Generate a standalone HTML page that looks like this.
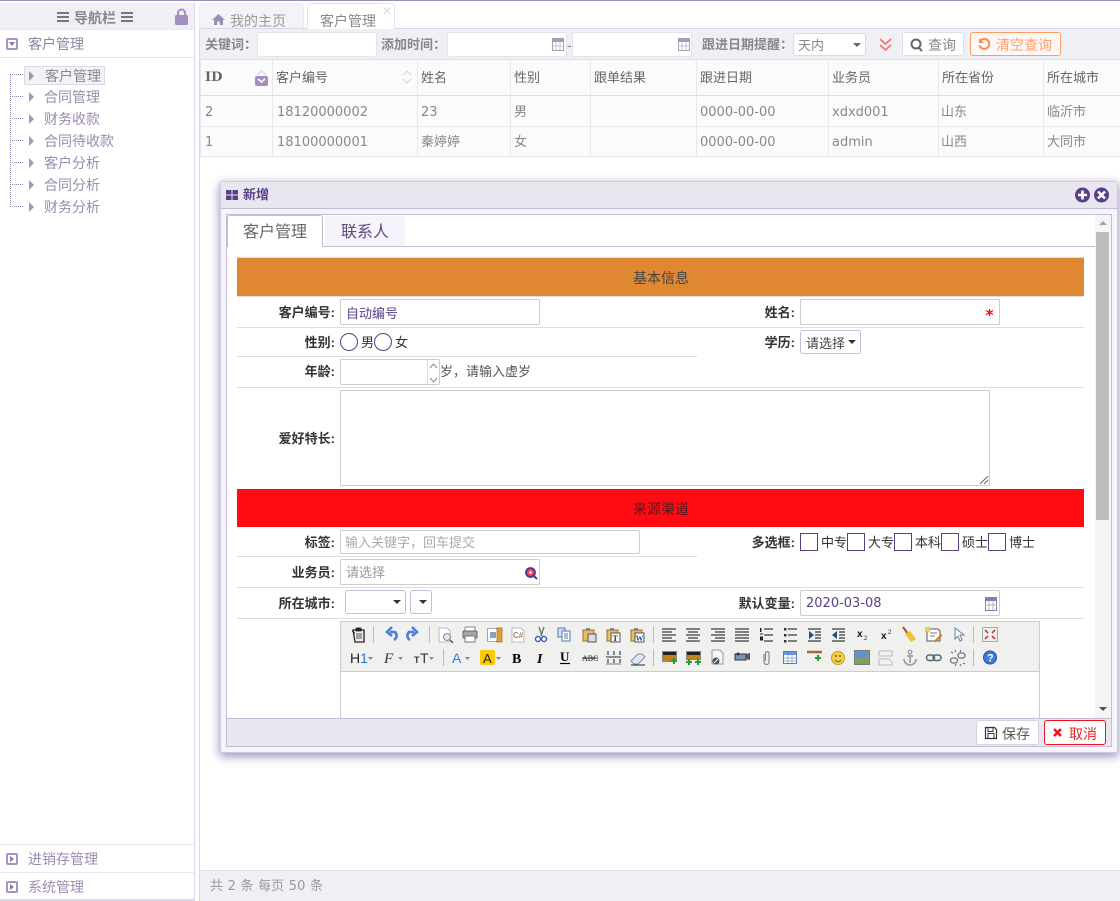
<!DOCTYPE html>
<html lang="zh"><head><meta charset="utf-8"><title>客户管理</title>
<style>
*{box-sizing:border-box}
html,body{margin:0;padding:0;width:1120px;height:901px;overflow:hidden;background:#fff}
body{position:relative;font:14px/18px "Liberation Sans","WenQuanYi Zen Hei","Noto Sans CJK SC",sans-serif;color:#777}
.a,.t,.i{position:absolute}
.t{white-space:nowrap;margin-top:1px}
.f{font-size:13px;margin-top:2px}
.n{font-family:"DejaVu Sans","WenQuanYi Zen Hei",sans-serif;font-size:13px;margin-top:2px}
.i{background:#fff;border:1px solid #ccc;border-radius:2px}
.tr{color:#9a8bb0}
.th{color:#666;top:68px;font-size:13px}
.r1{top:102px;color:#888;font-size:13px}
.r2{top:132px;color:#888;font-size:13px}
.v{position:absolute;top:60px;width:1px;height:97px;background:#e8e8ea}
.h{position:absolute;height:1px;background:#ddd}
.l{color:#333;font-weight:bold;text-align:right;width:100px;font-size:13px;margin-top:2px}
.l2{color:#333;font-size:13px;margin-top:2px}
.dot{position:absolute;left:10px;width:13px;border-top:1px dotted #8f80ad}
.tri{position:absolute;width:0;height:0;border-left:5px solid #a596bd;border-top:5px solid transparent;border-bottom:5px solid transparent;left:29px}
.caret{position:absolute;width:0;height:0;border-top:4px solid #333;border-left:4px solid transparent;border-right:4px solid transparent}
.cb{position:absolute;top:533px;width:18px;height:18px;border:1px solid #5a3f87;background:#fff}
svg{position:absolute;overflow:visible}
svg text{letter-spacing:0}
</style></head><body>

<div class="a" style="left:0;top:0;width:1120px;height:1px;background:#9d8bbd"></div>

<!-- sidebar -->
<div class="a" style="left:194px;top:3px;width:1px;height:898px;background:#d9d6e9"></div>
<div class="a" style="left:0;top:3px;width:194px;height:27px;background:#f0eff5;border-bottom:1px solid #e8e6f0"></div>
<div class="t" style="left:74px;top:8px;font-weight:bold;color:#888">导航栏</div>
<svg style="left:0;top:0" width="195" height="30"><g fill="#777"><rect x="57" y="12" width="12" height="2"/><rect x="57" y="16" width="12" height="2"/><rect x="57" y="20" width="12" height="2"/><rect x="121" y="12" width="12" height="2"/><rect x="121" y="16" width="12" height="2"/><rect x="121" y="20" width="12" height="2"/></g><path d="M178 16v-3a3.500 3.500 0 0 1 7 0v3" fill="none" stroke="#a28fbf" stroke-width="2"/><rect x="175" y="15" width="13" height="10" rx="1.500" fill="#a28fbf"/></svg>

<svg style="left:0;top:0" width="20" height="900"><g fill="#fff" stroke="#a892bf" stroke-width="2"><rect x="7" y="39" width="10" height="10" rx="1"/><rect x="7" y="854" width="10" height="10" rx="1"/><rect x="7" y="882" width="10" height="10" rx="1"/></g><path d="M9 42h6l-3 4z" fill="#8e76ac"/><path d="M10 856v6l4-3zM10 884v6l4-3z" fill="#8e76ac"/></svg>
<div class="t" style="left:28px;top:34px;color:#8d84a0">客户管理</div>
<div class="a" style="left:0;top:57px;width:194px;height:1px;background:#e8e6f0"></div>

<div class="a" style="left:10px;top:74px;height:133px;border-left:1px dotted #8f80ad"></div>
<div class="dot" style="top:74px"></div><div class="dot" style="top:96px"></div><div class="dot" style="top:118px"></div><div class="dot" style="top:140px"></div><div class="dot" style="top:162px"></div><div class="dot" style="top:184px"></div><div class="dot" style="top:206px"></div>
<div class="a" style="left:24px;top:66px;width:81px;height:19px;background:#f3f2f7;border:1px solid #dcd9e8"></div>
<div class="tri" style="top:71px;border-left-color:#999"></div><div class="tri" style="top:92px"></div><div class="tri" style="top:114px"></div><div class="tri" style="top:136px"></div><div class="tri" style="top:158px"></div><div class="tri" style="top:180px"></div><div class="tri" style="top:202px"></div>
<div class="t" style="left:45px;top:66px;color:#888">客户管理</div>
<div class="t tr" style="left:44px;top:87px">合同管理</div>
<div class="t tr" style="left:44px;top:109px">财务收款</div>
<div class="t tr" style="left:44px;top:131px">合同待收款</div>
<div class="t tr" style="left:44px;top:153px">客户分析</div>
<div class="t tr" style="left:44px;top:175px">合同分析</div>
<div class="t tr" style="left:44px;top:197px">财务分析</div>

<div class="a" style="left:0;top:844px;width:194px;height:1px;background:#e8e6f0"></div>
<div class="t" style="left:28px;top:849px;color:#9a8bb0">进销存管理</div>
<div class="a" style="left:0;top:872px;width:194px;height:1px;background:#e8e6f0"></div>
<div class="t" style="left:28px;top:877px;color:#9a8bb0">系统管理</div>
<div class="a" style="left:0;top:899px;width:194px;height:2px;background:#d9d6e9"></div>

<!-- main -->
<div class="a" style="left:199px;top:28px;width:1px;height:873px;background:#d9d6e9"></div>
<div class="a" style="left:199px;top:3px;width:105px;height:26px;background:#f4f3f8;border:1px solid #ebe9f2;border-bottom:0;border-radius:4px 4px 0 0"></div>
<svg style="left:0;top:0" width="240" height="30"><path d="M212 20l6.500-6 6.500 6h-2v5h-3.200v-3.500h-2.600v3.500h-3.200v-5z" fill="#9c8fb5"/></svg>
<div class="t" style="left:230px;top:11px;color:#999">我的主页</div>
<div class="a" style="left:307px;top:3px;width:88px;height:27px;background:#fff;border:1px solid #e6e3ef;border-bottom:0;border-radius:4px 4px 0 0"></div>
<div class="t" style="left:320px;top:11px;color:#888">客户管理</div>
<div class="t" style="left:382px;top:1px;color:#ddd;font-size:12px">✕</div>
<div class="a" style="left:200px;top:28px;width:107px;height:1px;background:#d9d6e9"></div>
<div class="a" style="left:395px;top:28px;width:725px;height:1px;background:#d9d6e9"></div>

<div class="a" style="left:200px;top:29px;width:920px;height:31px;background:#f0eff6;border-bottom:1px solid #dedbea"></div>
<div class="t f" style="left:205px;top:34px;color:#888;font-weight:bold">关键词：</div>
<div class="i" style="left:257px;top:32px;width:120px;height:25px;border-color:#e4e2ec"></div>
<div class="t f" style="left:381px;top:34px;color:#888;font-weight:bold">添加时间：</div>
<div class="i" style="left:447px;top:32px;width:120px;height:25px;border-color:#e4e2ec"></div>
<div class="t" style="left:567px;top:35px;color:#888">-</div>
<div class="i" style="left:572px;top:32px;width:120px;height:25px;border-color:#e4e2ec"></div>
<svg style="left:0;top:0" width="700" height="60"><g fill="#fff" stroke="#a79bb9"><rect x="552.500" y="39.500" width="11" height="11"/><rect x="678.500" y="39.500" width="11" height="11"/></g><path d="M552 38h12v4h-12zM678 38h12v4h-12z" fill="#a79bb9"/><path d="M556 42v8M560 42v8M552 46h12M682 42v8M686 42v8M678 46h12" stroke="#c9c1d6"/></svg>
<div class="t f" style="left:702px;top:34px;color:#888;font-weight:bold">跟进日期提醒：</div>
<div class="i" style="left:793px;top:33px;width:73px;height:23px;border-color:#dcd9e6;border-radius:3px"></div>
<div class="t f" style="left:798px;top:35px;color:#888">天内</div>
<div class="caret" style="left:853px;top:43px;border-top-color:#666"></div>
<svg style="left:0;top:0" width="900" height="60"><path d="M880 39l5.500 5 5.500-5M880 45l5.500 5 5.500-5" fill="none" stroke="#f4736f" stroke-width="1.700"/></svg>
<div class="i" style="left:902px;top:32px;width:62px;height:24px;border-color:#dedbea;border-radius:3px"></div>
<svg style="left:0;top:0" width="930" height="60"><circle cx="916" cy="44" r="4.500" fill="none" stroke="#666" stroke-width="2"/><path d="M919 48l3 3" stroke="#666" stroke-width="2"/></svg>
<div class="t" style="left:928px;top:35px;color:#888">查询</div>
<div class="i" style="left:970px;top:32px;width:91px;height:24px;border-color:#ff9c5e;border-radius:3px;background:#fdf8f5"></div>
<svg style="left:0;top:0" width="995" height="60"><path d="M981 40a5 5 0 1 1-1.500 5.500" fill="none" stroke="#ff8b4a" stroke-width="2"/><path d="M979 38v5h5z" fill="#ff8b4a"/></svg>
<div class="t" style="left:996px;top:35px;color:#ffa06b">清空查询</div>

<!-- grid -->
<div class="a" style="left:200px;top:60px;width:920px;height:97px;background:#fbfbfb"></div>
<div class="a" style="left:200px;top:95px;width:920px;height:1px;background:#dedbe8"></div>
<div class="a" style="left:200px;top:126px;width:920px;height:1px;background:#e8e8ea"></div>
<div class="a" style="left:200px;top:156px;width:920px;height:1px;background:#e8e8ea"></div>
<div class="v" style="left:200px"></div><div class="v" style="left:272px"></div><div class="v" style="left:417px"></div><div class="v" style="left:510px"></div><div class="v" style="left:590px"></div><div class="v" style="left:696px"></div><div class="v" style="left:828px"></div><div class="v" style="left:938px"></div><div class="v" style="left:1043px"></div>
<div class="t" style="left:205px;top:68px;font-family:'DejaVu Serif','Liberation Serif',serif;font-weight:bold;font-size:13px;color:#666">ID</div>
<svg style="left:0;top:0" width="420" height="90"><path d="M257 75l4.500-4 4.500 4" fill="none" stroke="#ddd" stroke-width="1.500"/><rect x="255" y="76" width="13" height="10" rx="2" fill="#a28fbf"/><path d="M258 79l3.500 3 3.500-3" fill="none" stroke="#fff" stroke-width="1.500"/><path d="M403 75l4-4 4 4M403 79l4 4 4-4" fill="none" stroke="#ddd" stroke-width="1.300"/></svg>
<div class="t th" style="left:276px">客户编号</div><div class="t th" style="left:421px">姓名</div><div class="t th" style="left:514px">性别</div><div class="t th" style="left:594px">跟单结果</div><div class="t th" style="left:700px">跟进日期</div><div class="t th" style="left:832px">业务员</div><div class="t th" style="left:942px">所在省份</div><div class="t th" style="left:1047px">所在城市</div>
<div class="t r1 n" style="left:205px">2</div><div class="t r1 n" style="left:277px">18120000002</div><div class="t r1 n" style="left:421px">23</div><div class="t r1" style="left:514px">男</div><div class="t r1 n" style="left:700px">0000-00-00</div><div class="t r1 n" style="left:832px">xdxd001</div><div class="t r1" style="left:941px">山东</div><div class="t r1" style="left:1047px">临沂市</div>
<div class="t r2 n" style="left:205px">1</div><div class="t r2 n" style="left:277px">18100000001</div><div class="t r2" style="left:421px">秦婷婷</div><div class="t r2" style="left:514px">女</div><div class="t r2 n" style="left:700px">0000-00-00</div><div class="t r2 n" style="left:832px">admin</div><div class="t r2" style="left:941px">山西</div><div class="t r2" style="left:1047px">大同市</div>

<div class="a" style="left:200px;top:870px;width:920px;height:31px;background:#f0eff6;border-top:1px solid #dedbea"></div>
<div class="t n" style="left:210px;top:876px;color:#999;word-spacing:.5px">共 2 条 每页 50 条</div>

<!-- dialog -->
<div class="a" style="left:220px;top:181px;width:898px;height:572px;background:#f6f4fb;border:1px solid #d0c8e0;border-radius:3px;box-shadow:0 3px 9px 1px rgba(95,75,140,.55)"></div>
<div class="a" style="left:221px;top:182px;width:896px;height:27px;background:#e8e6ee;border-bottom:1px solid #c5bbd8"></div>
<svg style="left:0;top:0" width="1120" height="210"><path d="M226 190h5.500v4.500h-5.500zM232.500 190h5.500v4.500h-5.500zM226 195.500h5.500v4.500h-5.500zM232.500 195.500h5.500v4.500h-5.500z" fill="#5a3f87"/><circle cx="1082.500" cy="195" r="7.500" fill="#5a3f87"/><path d="M1078 195h9M1082.500 190.500v9" stroke="#fff" stroke-width="2.600"/><circle cx="1101.500" cy="195" r="7.500" fill="#5a3f87"/><path d="M1098 191.500l7 7M1105 191.500l-7 7" stroke="#fff" stroke-width="2.600"/></svg>
<div class="t f" style="left:243px;top:184px;color:#5a3f87;font-weight:bold">新增</div>

<div class="a" style="left:226px;top:214px;width:886px;height:505px;background:#fff;border:1px solid #c5bbd8;border-bottom:0"></div>
<div class="a" style="left:227px;top:246px;width:868px;height:1px;background:#c5bbd8"></div>
<div class="a" style="left:227px;top:215px;width:96px;height:32px;background:#fff;border:1px solid #c5bbd8;border-bottom:0;border-radius:3px 3px 0 0"></div>
<div class="a" style="left:325px;top:216px;width:80px;height:30px;background:#f6f4fb"></div>
<div class="t" style="left:243px;top:223px;font-size:16px;color:#666">客户管理</div>
<div class="t" style="left:341px;top:223px;font-size:16px;color:#5e4a80">联系人</div>

<div class="a" style="left:1095px;top:215px;width:16px;height:503px;background:#f5f5f5"></div>
<div class="a" style="left:1096px;top:232px;width:13px;height:288px;background:#bdbdbd"></div>
<svg style="left:0;top:0" width="1120" height="720"><path d="M1099 225l4-4 4 4z" fill="#a3a3a3"/><path d="M1099 707l4 4 4-4z" fill="#505050"/></svg>

<div class="h" style="left:237px;top:257px;width:847px"></div>
<div class="a" style="left:237px;top:258px;width:847px;height:38px;background:#e08731"></div>
<div class="t" style="left:633px;top:268px;color:#444">基本信息</div>
<div class="h" style="left:237px;top:296px;width:847px"></div>

<div class="t l" style="left:235px;top:302px">客户编号:</div>
<div class="i" style="left:340px;top:299px;width:200px;height:26px"></div>
<div class="t f" style="left:346px;top:303px;color:#5a3f87">自动编号</div>
<div class="t l" style="left:695px;top:302px">姓名:</div>
<div class="i" style="left:800px;top:299px;width:200px;height:26px"></div>
<svg style="left:0;top:0" width="1000" height="320"><path d="M989.500 309v7M986 310.500l7 4M993 310.500l-7 4" stroke="#f00" stroke-width="1.200"/></svg>
<div class="h" style="left:237px;top:327px;width:847px"></div>

<div class="t l" style="left:235px;top:332px">性别:</div>
<div class="a" style="left:340px;top:333px;width:18px;height:18px;border:1px solid #5a3f87;border-radius:50%"></div>
<div class="t l2" style="left:361px;top:332px">男</div>
<div class="a" style="left:374px;top:333px;width:18px;height:18px;border:1px solid #5a3f87;border-radius:50%"></div>
<div class="t l2" style="left:395px;top:332px">女</div>
<div class="t l" style="left:695px;top:332px">学历:</div>
<div class="a" style="left:800px;top:330px;width:61px;height:24px;border:1px solid #c5bbd8;border-radius:3px"></div>
<div class="t f" style="left:806px;top:333px;color:#444">请选择</div>
<div class="caret" style="left:848px;top:340px"></div>
<div class="h" style="left:237px;top:356px;width:460px"></div>

<div class="t l" style="left:235px;top:361px">年龄:</div>
<div class="i" style="left:340px;top:359px;width:100px;height:26px"></div>
<div class="a" style="left:427px;top:360px;width:1px;height:24px;background:#ddd"></div>
<svg style="left:0;top:0" width="440" height="390"><path d="M430 368l3.500-4 3.500 4M430 378l3.500 4 3.500-4" fill="none" stroke="#8f80ad"/></svg>
<div class="t l2" style="left:440px;top:361px;color:#555">岁，请输入虚岁</div>
<div class="h" style="left:237px;top:387px;width:847px"></div>

<div class="t l" style="left:235px;top:428px">爱好特长:</div>
<div class="i" style="left:340px;top:390px;width:650px;height:96px"></div>
<svg style="left:0;top:0" width="990" height="486"><path d="M980 484l8-8M984 484l4-4" stroke="#666"/></svg>

<div class="a" style="left:237px;top:489px;width:847px;height:38px;background:#fe0b13"></div>
<div class="t" style="left:633px;top:499px;color:#5a1a1a">来源渠道</div>

<div class="t l" style="left:235px;top:532px">标签:</div>
<div class="i" style="left:340px;top:530px;width:300px;height:24px"></div>
<div class="t f" style="left:345px;top:532px;color:#aaa">输入关键字，回车提交</div>
<div class="t l" style="left:695px;top:532px">多选框:</div>
<div class="cb" style="left:800px"></div><div class="t l2" style="left:821px;top:532px">中专</div>
<div class="cb" style="left:847px"></div><div class="t l2" style="left:868px;top:532px">大专</div>
<div class="cb" style="left:894px"></div><div class="t l2" style="left:915px;top:532px">本科</div>
<div class="cb" style="left:941px"></div><div class="t l2" style="left:962px;top:532px">硕士</div>
<div class="cb" style="left:988px"></div><div class="t l2" style="left:1009px;top:532px">博士</div>
<div class="h" style="left:237px;top:556px;width:460px"></div>

<div class="t l" style="left:235px;top:562px">业务员:</div>
<div class="i" style="left:340px;top:559px;width:200px;height:26px"></div>
<div class="t f" style="left:346px;top:562px;color:#999">请选择</div>
<svg style="left:0;top:0" width="540" height="585"><circle cx="530.500" cy="572.500" r="4.500" fill="#f04060" stroke="#4a3a8a" stroke-width="1.800"/><path d="M534 576l3 3" stroke="#4a3a8a" stroke-width="2"/><circle cx="530.500" cy="572.500" r="1.300" fill="#fff"/></svg>
<div class="h" style="left:237px;top:587px;width:847px"></div>

<div class="t l" style="left:235px;top:593px">所在城市:</div>
<div class="a" style="left:345px;top:590px;width:61px;height:24px;border:1px solid #c5bbd8;border-radius:3px"></div>
<div class="caret" style="left:393px;top:600px"></div>
<div class="a" style="left:410px;top:590px;width:22px;height:24px;border:1px solid #c5bbd8;border-radius:3px"></div>
<div class="caret" style="left:419px;top:600px"></div>
<div class="t l" style="left:695px;top:593px">默认变量:</div>
<div class="i" style="left:800px;top:590px;width:200px;height:26px"></div>
<div class="t n" style="left:806px;top:593px;color:#5a3f87">2020-03-08</div>
<svg style="left:0;top:0" width="1000" height="615"><rect x="985.500" y="599.500" width="11" height="11" fill="#fff" stroke="#8b7aa5"/><path d="M985 597h12v4h-12z" fill="#8b7aa5"/><path d="M989 601v9M993 601v9M985 605h12" stroke="#b9aecb"/></svg>
<div class="h" style="left:237px;top:618px;width:847px"></div>

<!-- editor -->
<div class="a" style="left:340px;top:621px;width:700px;height:97px;background:#fff;border:1px solid #ccc;border-bottom:0"></div>
<div class="a" style="left:341px;top:622px;width:698px;height:50px;background:#f0f0ee;border-bottom:1px solid #ccc"></div>
<svg style="left:0;top:0" width="1040" height="680">
<g fill="#bbb"><rect x="373" y="626" width="1" height="17"/><rect x="429" y="626" width="1" height="17"/><rect x="653" y="626" width="1" height="17"/><rect x="973" y="626" width="1" height="17"/><rect x="443" y="649" width="1" height="17"/><rect x="653" y="649" width="1" height="17"/><rect x="973" y="649" width="1" height="17"/></g>
<!-- row 1 -->
<path d="M353 630h11v12h-9z" fill="#eee" stroke="#222" stroke-width="1.300"/><path d="M356 628h5v3h-5zM352 631l3 2M356 634h6M356 636h6M356 638h6" fill="#222" stroke="#222" stroke-width=".8"/>
<path d="M394 640a5 5 0 0 0 1-8h-5M392 627l-5 5 5 4" fill="none" stroke="#4a80d8" stroke-width="2.600"/>
<path d="M410 640a5 5 0 0 1-1-8h5M412 627l5 5-5 4" fill="none" stroke="#4a80d8" stroke-width="2.600"/>
<path d="M439 628h8l3 3v11h-11z" fill="#fff" stroke="#bbb"/><circle cx="447" cy="637" r="3.500" fill="#dbe9f7" stroke="#7b8ea0"/><path d="M450 640l3 3" stroke="#555" stroke-width="1.500"/>
<path d="M465 627h10v4h-10z" fill="#fff" stroke="#888"/><rect x="463" y="631" width="14" height="7" rx="1" fill="#a5a5a5" stroke="#666"/><path d="M465 636h10v6h-10z" fill="#fff" stroke="#777"/>
<rect x="487.500" y="628.500" width="13" height="13" fill="#fff" stroke="#555" stroke-dasharray="1 1"/><rect x="497" y="628" width="5" height="14" fill="#e0a030" stroke="#a06a10" stroke-width=".7"/><path d="M490 632h6v6h-6z" fill="#7fa4c4"/>
<path d="M512 628h9l3 3v11h-12z" fill="#fff" stroke="#bbb"/><text x="513" y="638" font-size="8" font-weight="bold" fill="#b08060" font-family="Liberation Sans">C#</text>
<path d="M539 627l3 9M544 627l-3 9" stroke="#777" stroke-width="1.400"/><circle cx="538" cy="639" r="2.500" fill="#fff" stroke="#3e62b0" stroke-width="1.500"/><circle cx="544" cy="639" r="2.500" fill="#fff" stroke="#3e62b0" stroke-width="1.500"/>
<path d="M558 628h7v9h-7z" fill="#d6e4f6" stroke="#4d78b8"/><path d="M562 631h8v10h-8z" fill="#fff" stroke="#4d78b8"/><path d="M564 634h4M564 636h4M564 638h4" stroke="#4d78b8"/>
<g fill="#e8c060" stroke="#9c7020"><rect x="583" y="630" width="11" height="11"/><rect x="607" y="630" width="11" height="11"/><rect x="631" y="630" width="11" height="11"/></g>
<g fill="#ddd" stroke="#555"><rect x="588" y="634" width="8" height="8"/></g><g fill="#fff" stroke="#555"><rect x="611" y="633" width="9" height="9"/><rect x="635" y="633" width="9" height="9"/></g><path d="M586 628h4v3h-4zM610 628h4v3h-4zM634 628h4v3h-4z" fill="#888"/>
<text x="612.500" y="641" font-size="8" font-weight="bold" fill="#222" font-family="Liberation Serif">T</text><text x="635.500" y="641" font-size="8" font-weight="bold" fill="#2255aa" font-family="Liberation Serif">W</text>
<g stroke="#111"><path d="M662 629h14M662 632h10M662 635h14M662 638h10M662 641h14M686 629h14M688 632h10M686 635h14M688 638h10M686 641h14M711 629h14M715 632h10M711 635h14M715 638h10M711 641h14M735 629h14M735 632h14M735 635h14M735 638h14M735 641h14"/>
<path d="M764 629h9M764 635h9M764 641h9M788 629h9M788 635h9M788 641h9M808 629h13M815 632h6M815 635h6M815 638h6M808 641h13M832 629h13M839 632h6M839 635h6M839 638h6M832 641h13"/></g>
<path d="M760 628h1.500v4h-1.500zM760 633.500h3v1h-3zM760 636.500h3v4h-3z" fill="#222"/><g fill="#333"><rect x="784" y="628" width="2.500" height="2.500"/><rect x="784" y="634" width="2.500" height="2.500"/><rect x="784" y="640" width="2.500" height="2.500"/></g>
<path d="M809 631l5 4-5 4zM837 631l-5 4 5 4z" fill="#234a8a"/>
<text x="857" y="637" font-size="10" font-weight="bold" fill="#111" font-family="Liberation Sans">x</text><text x="864" y="640" font-size="6" fill="#225" font-family="Liberation Sans">2</text>
<text x="881" y="639" font-size="10" font-weight="bold" fill="#111" font-family="Liberation Sans">x</text><text x="888" y="634" font-size="6" fill="#225" font-family="Liberation Sans">2</text>
<path d="M903 627l5 7" stroke="#9a5a20" stroke-width="2"/><path d="M905 634l5-3 6 8-5 3z" fill="#ecc23a"/>
<path d="M927 629h11l2 2v10h-13z" fill="#fff" stroke="#555"/><path d="M925 627h5v5h-5z" fill="#f0d040"/><path d="M930 633h7M930 636h5" stroke="#777"/><path d="M934 641l7-7 1.500 1.500-7 7z" fill="#d67a20"/>
<path d="M955 628v11l3-3 2 5 2-1-2-5h4z" fill="#fff" stroke="#6680a8"/>
<rect x="982.500" y="627.500" width="15" height="14" fill="#eee" stroke="#aaa"/><path d="M985 630l3 3M995 630l-3 3M985 639l3-3M995 639l-3-3" stroke="#b03030" stroke-width="1.500"/>
<!-- row 2 -->
<text x="350" y="663" font-size="14" fill="#222" font-family="Liberation Sans">H<tspan fill="#2a72d8">1</tspan></text>
<text x="384" y="663" font-size="15" font-style="italic" fill="#333" font-family="Liberation Serif">F</text>
<text x="414" y="663" font-size="9" font-weight="bold" fill="#333" font-family="Liberation Sans">T</text><text x="420" y="663" font-size="14" fill="#333" font-family="Liberation Sans">T</text>
<text x="452" y="663" font-size="14" fill="#2f7be0" font-family="Liberation Sans">A</text>
<rect x="480" y="650" width="15" height="15" rx="2" fill="#ffc800"/><text x="483" y="663" font-size="13" fill="#222" font-family="Liberation Sans">A</text>
<g fill="#888"><path d="M368 657h5l-2.500 3zM398 657h5l-2.500 3zM429 657h5l-2.500 3zM465 657h5l-2.500 3zM496 657h5l-2.500 3z"/></g>
<text x="512" y="663" font-size="14" font-weight="bold" fill="#000" font-family="Liberation Serif">B</text>
<text x="537" y="663" font-size="14" font-weight="bold" font-style="italic" fill="#000" font-family="Liberation Serif">I</text>
<text x="560" y="661" font-size="13" font-weight="bold" fill="#000" font-family="Liberation Serif">U</text><path d="M560 663.500h10" stroke="#000" stroke-width="1.200"/>
<text x="582" y="661" font-size="8" fill="#222" font-family="Liberation Serif">ABC</text><path d="M582 658h16" stroke="#222"/>
<path d="M606 657h15" stroke="#555" stroke-width="1.300"/><path d="M608 651v4M614 651v4M620 651v4M608 659v4M614 659v4M620 659v4" stroke="#36527e" stroke-width="1.300"/><path d="M606 664h15" stroke="#777"/>
<path d="M631 661l7-7h4l3 3-7 7h-4z" fill="#dfe8f2" stroke="#7b8ea8"/><path d="M631 665h14" stroke="#222"/>
<rect x="662.500" y="651.500" width="14" height="10" fill="#c28318" stroke="#888"/><path d="M663 652h13v3h-13z" fill="#222"/><path d="M671 661h6M674 658v6" stroke="#2e9a2e" stroke-width="2"/>
<rect x="686.500" y="651.500" width="14" height="8" fill="#c28318" stroke="#888"/><path d="M687 652h13v3h-13z" fill="#222"/><path d="M686 662h6M689 659v6M695 662h6M698 659v6" stroke="#2e9a2e" stroke-width="2"/>
<path d="M712 650h8l3 3v11h-11z" fill="#f5f5f5" stroke="#999"/><circle cx="716" cy="661" r="3.500" fill="#456"/><path d="M714 663l4-4" stroke="#fff"/>
<rect x="735" y="654" width="11" height="6" fill="#7d96ae" stroke="#334"/><path d="M746 654l4-1v7l-4-1z" fill="#556"/><circle cx="738" cy="654" r="1.500" fill="#334"/>
<path d="M764 654v8a2.500 2.500 0 0 0 5 0v-9a1.800 1.800 0 0 0-3.500 0v8" fill="none" stroke="#888" stroke-width="1.200"/>
<rect x="783.500" y="651.500" width="13" height="12" fill="#fff" stroke="#5a7cb8"/><path d="M784 652h12v3h-12z" fill="#6b95d8"/><path d="M784 658h12M784 661h12M788 655v8M792 655v8" stroke="#9ab4d8"/>
<path d="M807 652h15" stroke="#9a7030" stroke-width="2.500"/><path d="M815 658h6M818 655v6" stroke="#2e9a2e" stroke-width="2"/>
<circle cx="838" cy="658" r="6.500" fill="#f7d040" stroke="#caa020"/><circle cx="836" cy="656" r=".9" fill="#444"/><circle cx="840" cy="656" r=".9" fill="#444"/><path d="M835 660a3.500 3.500 0 0 0 6 0" fill="none" stroke="#666"/>
<rect x="854.500" y="650.500" width="15" height="14" fill="#7fa060" stroke="#777"/><path d="M856 652h11v6h-11z" fill="#5e90d8"/>
<path d="M879 651h13v5M879 651v5h13M879 659h10l3 3v3h-13z" fill="#f2f2f2" stroke="#bbb"/>
<circle cx="910" cy="652" r="1.800" fill="none" stroke="#999" stroke-width="1.200"/><path d="M910 654v9M907 656h6M904 659a6 6 0 0 0 12 0" fill="none" stroke="#999" stroke-width="1.600"/>
<rect x="926.500" y="655" width="8" height="5.500" rx="2.700" fill="none" stroke="#567" stroke-width="1.500"/><rect x="933" y="655" width="8" height="5.500" rx="2.700" fill="none" stroke="#567" stroke-width="1.500"/>
<rect x="950.500" y="658" width="7" height="5" rx="2.500" fill="none" stroke="#678" stroke-width="1.300"/><rect x="958" y="653" width="7" height="5" rx="2.500" fill="none" stroke="#678" stroke-width="1.300"/><path d="M955 650l1 2M961 650l-1 2M951 652l2 1M955 666l1-2M961 666l-1-2M965 664l-2-1" stroke="#667"/>
<circle cx="990" cy="657.500" r="6.500" fill="#3f78d8" stroke="#2252a8"/><text x="987" y="661.500" font-size="11" font-weight="bold" fill="#fff" font-family="Liberation Sans">?</text>
</svg>

<!-- dialog footer -->
<div class="a" style="left:227px;top:718px;width:885px;height:29px;background:#e8e6ee;border-top:1px solid #c5bbd8;border-bottom:1px solid #c5bbd8"></div>
<div class="a" style="left:226px;top:718px;width:1px;height:29px;background:#c5bbd8"></div>
<div class="a" style="left:1111px;top:718px;width:1px;height:29px;background:#c5bbd8"></div>
<div class="i" style="left:976px;top:720px;width:63px;height:25px;border-color:#d8d2e6;border-radius:3px"></div>
<svg style="left:0;top:0" width="1120" height="750"><path d="M985.500 727.500h9l2 2v9h-11z" fill="#fff" stroke="#333" stroke-width="1.200"/><path d="M988 727.500h5v4h-5zM988 733.500h6v5h-6z" fill="none" stroke="#333"/></svg>
<div class="t" style="left:1002px;top:724px;color:#555">保存</div>
<div class="i" style="left:1044px;top:720px;width:62px;height:25px;border-color:#f01020;border-radius:3px"></div>
<svg style="left:0;top:0" width="1120" height="750"><path d="M1054 729l7 7M1061 729l-7 7" stroke="#f01020" stroke-width="2.600"/></svg>
<div class="t" style="left:1069px;top:724px;color:#f02030">取消</div>

</body></html>
